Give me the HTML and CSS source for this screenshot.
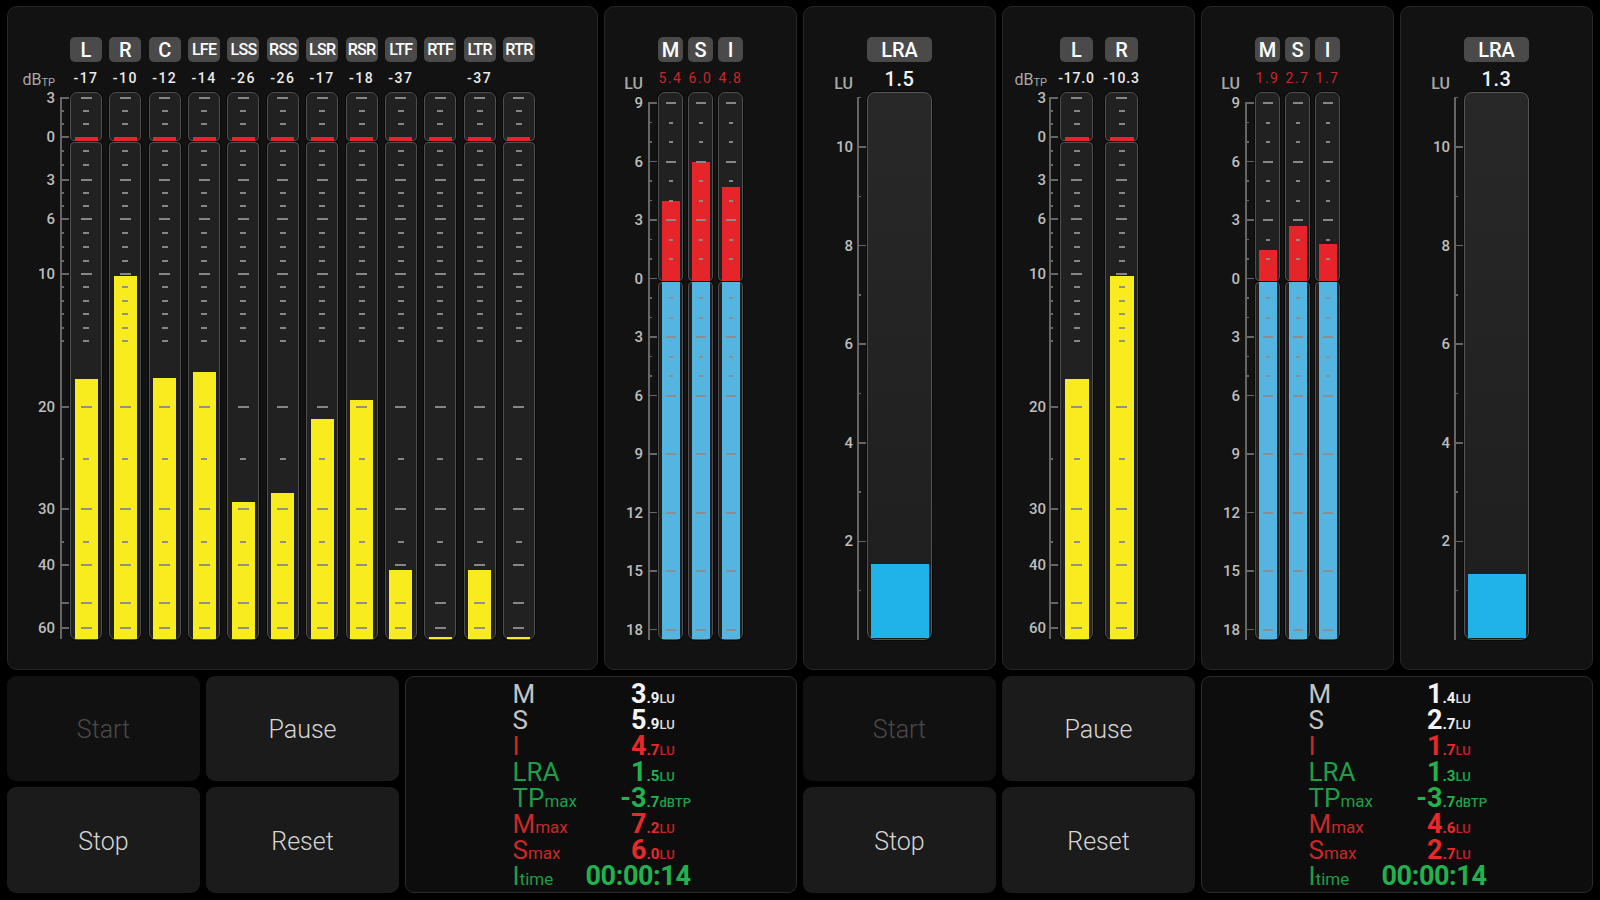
FILE: index.html
```html
<!DOCTYPE html>
<html lang="en">
<head>
<meta charset="utf-8">
<title>Loudness Meter</title>
<link rel="stylesheet" href="styles.css">
</head>
<body>
<div class="app">

  <!-- Multichannel true-peak meters -->
  <section class="panel multi">
    <div class="meter">
      <div class="scale">
        <div class="chip-space"></div>
        <div class="unit unit-db">dB<sub>TP</sub></div>
        <div class="scale-area">
          <div class="axis" data-scale="db"></div>
          <span class="sl" style="--y:6">3</span>
          <span class="sl" style="--y:45">0</span>
          <span class="sl" style="--y:88">3</span>
          <span class="sl" style="--y:127">6</span>
          <span class="sl" style="--y:182">10</span>
          <span class="sl" style="--y:315">20</span>
          <span class="sl" style="--y:417">30</span>
          <span class="sl" style="--y:473">40</span>
          <span class="sl" style="--y:536">60</span>
        </div>
      </div>
      <div class="channels">
        <div class="ch"><div class="chip">L</div><div class="val">-17</div>
          <div class="tube db"><div class="part top"><i class="zero"></i></div><div class="part bot"><b class="fill" style="--h:260"></b></div><div class="ticks" data-scale="db"></div></div></div>
        <div class="ch"><div class="chip">R</div><div class="val">-10</div>
          <div class="tube db"><div class="part top"><i class="zero"></i></div><div class="part bot"><b class="fill" style="--h:363"></b></div><div class="ticks" data-scale="db"></div></div></div>
        <div class="ch"><div class="chip">C</div><div class="val">-12</div>
          <div class="tube db"><div class="part top"><i class="zero"></i></div><div class="part bot"><b class="fill" style="--h:261"></b></div><div class="ticks" data-scale="db"></div></div></div>
        <div class="ch"><div class="chip sm">LFE</div><div class="val">-14</div>
          <div class="tube db"><div class="part top"><i class="zero"></i></div><div class="part bot"><b class="fill" style="--h:267"></b></div><div class="ticks" data-scale="db"></div></div></div>
        <div class="ch"><div class="chip sm">LSS</div><div class="val">-26</div>
          <div class="tube db"><div class="part top"><i class="zero"></i></div><div class="part bot"><b class="fill" style="--h:137.5"></b></div><div class="ticks" data-scale="db"></div></div></div>
        <div class="ch"><div class="chip sm">RSS</div><div class="val">-26</div>
          <div class="tube db"><div class="part top"><i class="zero"></i></div><div class="part bot"><b class="fill" style="--h:146.5"></b></div><div class="ticks" data-scale="db"></div></div></div>
        <div class="ch"><div class="chip sm">LSR</div><div class="val">-17</div>
          <div class="tube db"><div class="part top"><i class="zero"></i></div><div class="part bot"><b class="fill" style="--h:220.5"></b></div><div class="ticks" data-scale="db"></div></div></div>
        <div class="ch"><div class="chip sm">RSR</div><div class="val">-18</div>
          <div class="tube db"><div class="part top"><i class="zero"></i></div><div class="part bot"><b class="fill" style="--h:239.5"></b></div><div class="ticks" data-scale="db"></div></div></div>
        <div class="ch"><div class="chip sm">LTF</div><div class="val">-37</div>
          <div class="tube db"><div class="part top"><i class="zero"></i></div><div class="part bot"><b class="fill" style="--h:69.5"></b></div><div class="ticks" data-scale="db"></div></div></div>
        <div class="ch"><div class="chip sm">RTF</div><div class="val"></div>
          <div class="tube db"><div class="part top"><i class="zero"></i></div><div class="part bot"><b class="fill" style="--h:2"></b></div><div class="ticks" data-scale="db"></div></div></div>
        <div class="ch"><div class="chip sm">LTR</div><div class="val">-37</div>
          <div class="tube db"><div class="part top"><i class="zero"></i></div><div class="part bot"><b class="fill" style="--h:69"></b></div><div class="ticks" data-scale="db"></div></div></div>
        <div class="ch"><div class="chip sm">RTR</div><div class="val"></div>
          <div class="tube db"><div class="part top"><i class="zero"></i></div><div class="part bot"><b class="fill" style="--h:2"></b></div><div class="ticks" data-scale="db"></div></div></div>
      </div>
    </div>
  </section>

  <!-- M / S / I loudness 1 -->
  <section class="panel msi msi1">
    <div class="meter">
      <div class="scale">
        <div class="chip-space"></div>
        <div class="unit unit-lu">LU</div>
        <div class="scale-area">
          <div class="axis" data-scale="lu"></div>
          <span class="sl" style="--y:11">9</span>
          <span class="sl" style="--y:69.5">6</span>
          <span class="sl" style="--y:128">3</span>
          <span class="sl" style="--y:186.5">0</span>
          <span class="sl" style="--y:245">3</span>
          <span class="sl" style="--y:303.5">6</span>
          <span class="sl" style="--y:362">9</span>
          <span class="sl" style="--y:420.5">12</span>
          <span class="sl" style="--y:479">15</span>
          <span class="sl" style="--y:537.5">18</span>
        </div>
      </div>
      <div class="channels">
        <div class="ch"><div class="chip">M</div><div class="val red">5.4</div>
          <div class="tube lu"><div class="part top"><b class="fill red" style="--h:80.5"></b></div><div class="part bot"><b class="fill blue"></b></div><div class="ticks" data-scale="lu"></div></div></div>
        <div class="ch"><div class="chip">S</div><div class="val red">6.0</div>
          <div class="tube lu"><div class="part top"><b class="fill red" style="--h:119.5"></b></div><div class="part bot"><b class="fill blue"></b></div><div class="ticks" data-scale="lu"></div></div></div>
        <div class="ch"><div class="chip">I</div><div class="val red">4.8</div>
          <div class="tube lu"><div class="part top"><b class="fill red" style="--h:95"></b></div><div class="part bot"><b class="fill blue"></b></div><div class="ticks" data-scale="lu"></div></div></div>
      </div>
    </div>
  </section>

  <!-- LRA 1 -->
  <section class="panel lra lra1">
    <div class="meter">
      <div class="scale">
        <div class="chip-space"></div>
        <div class="unit unit-lu">LU</div>
        <div class="scale-area">
          <div class="axis" data-scale="lra"></div>
          <span class="sl" style="--y:55">10</span>
          <span class="sl" style="--y:153.6">8</span>
          <span class="sl" style="--y:252.2">6</span>
          <span class="sl" style="--y:350.8">4</span>
          <span class="sl" style="--y:449.4">2</span>
        </div>
      </div>
      <div class="channels">
        <div class="ch"><div class="chip">LRA</div><div class="val big">1.5</div>
          <div class="lratube"><b class="lrafill" style="--h:74"></b></div></div>
      </div>
    </div>
  </section>

  <!-- L / R true-peak -->
  <section class="panel lr">
    <div class="meter">
      <div class="scale">
        <div class="chip-space"></div>
        <div class="unit unit-db">dB<sub>TP</sub></div>
        <div class="scale-area">
          <div class="axis" data-scale="db"></div>
          <span class="sl" style="--y:6">3</span>
          <span class="sl" style="--y:45">0</span>
          <span class="sl" style="--y:88">3</span>
          <span class="sl" style="--y:127">6</span>
          <span class="sl" style="--y:182">10</span>
          <span class="sl" style="--y:315">20</span>
          <span class="sl" style="--y:417">30</span>
          <span class="sl" style="--y:473">40</span>
          <span class="sl" style="--y:536">60</span>
        </div>
      </div>
      <div class="channels">
        <div class="ch"><div class="chip">L</div><div class="val">-17.0</div>
          <div class="tube db"><div class="part top"><i class="zero"></i></div><div class="part bot"><b class="fill" style="--h:260"></b></div><div class="ticks" data-scale="db"></div></div></div>
        <div class="ch"><div class="chip">R</div><div class="val">-10.3</div>
          <div class="tube db"><div class="part top"><i class="zero"></i></div><div class="part bot"><b class="fill" style="--h:363"></b></div><div class="ticks" data-scale="db"></div></div></div>
      </div>
    </div>
  </section>

  <!-- M / S / I loudness 2 -->
  <section class="panel msi msi2">
    <div class="meter">
      <div class="scale">
        <div class="chip-space"></div>
        <div class="unit unit-lu">LU</div>
        <div class="scale-area">
          <div class="axis" data-scale="lu"></div>
          <span class="sl" style="--y:11">9</span>
          <span class="sl" style="--y:69.5">6</span>
          <span class="sl" style="--y:128">3</span>
          <span class="sl" style="--y:186.5">0</span>
          <span class="sl" style="--y:245">3</span>
          <span class="sl" style="--y:303.5">6</span>
          <span class="sl" style="--y:362">9</span>
          <span class="sl" style="--y:420.5">12</span>
          <span class="sl" style="--y:479">15</span>
          <span class="sl" style="--y:537.5">18</span>
        </div>
      </div>
      <div class="channels">
        <div class="ch"><div class="chip">M</div><div class="val red">1.9</div>
          <div class="tube lu"><div class="part top"><b class="fill red" style="--h:31.75"></b></div><div class="part bot"><b class="fill blue"></b></div><div class="ticks" data-scale="lu"></div></div></div>
        <div class="ch"><div class="chip">S</div><div class="val red">2.7</div>
          <div class="tube lu"><div class="part top"><b class="fill red" style="--h:56"></b></div><div class="part bot"><b class="fill blue"></b></div><div class="ticks" data-scale="lu"></div></div></div>
        <div class="ch"><div class="chip">I</div><div class="val red">1.7</div>
          <div class="tube lu"><div class="part top"><b class="fill red" style="--h:37.6"></b></div><div class="part bot"><b class="fill blue"></b></div><div class="ticks" data-scale="lu"></div></div></div>
      </div>
    </div>
  </section>

  <!-- LRA 2 -->
  <section class="panel lra lra2">
    <div class="meter">
      <div class="scale">
        <div class="chip-space"></div>
        <div class="unit unit-lu">LU</div>
        <div class="scale-area">
          <div class="axis" data-scale="lra"></div>
          <span class="sl" style="--y:55">10</span>
          <span class="sl" style="--y:153.6">8</span>
          <span class="sl" style="--y:252.2">6</span>
          <span class="sl" style="--y:350.8">4</span>
          <span class="sl" style="--y:449.4">2</span>
        </div>
      </div>
      <div class="channels">
        <div class="ch"><div class="chip">LRA</div><div class="val big">1.3</div>
          <div class="lratube"><b class="lrafill" style="--h:64"></b></div></div>
      </div>
    </div>
  </section>

  <!-- Controls 1 -->
  <button class="btn disabled start1">Start</button>
  <button class="btn pause1">Pause</button>
  <button class="btn stop1">Stop</button>
  <button class="btn reset1">Reset</button>

  <!-- Readout 1 -->
  <section class="readout readout1">
    <div class="rgrid">
      <span class="lbl gray">M</span><span class="int w">3</span><span class="frac w">.9<em>LU</em></span>
      <span class="lbl gray">S</span><span class="int w">5</span><span class="frac w">.9<em>LU</em></span>
      <span class="lbl red">I</span><span class="int r">4</span><span class="frac r">.7<em>LU</em></span>
      <span class="lbl green">LRA</span><span class="int g">1</span><span class="frac g">.5<em>LU</em></span>
      <span class="lbl green">TP<small>max</small></span><span class="int g">-3</span><span class="frac g">.7<em>dBTP</em></span>
      <span class="lbl red">M<small>max</small></span><span class="int r">7</span><span class="frac r">.2<em>LU</em></span>
      <span class="lbl red">S<small>max</small></span><span class="int r">6</span><span class="frac r">.0<em>LU</em></span>
      <span class="lbl green">I<small>time</small></span><span class="timer g">00:00:14</span>
    </div>
  </section>

  <!-- Controls 2 -->
  <button class="btn disabled start2">Start</button>
  <button class="btn pause2">Pause</button>
  <button class="btn stop2">Stop</button>
  <button class="btn reset2">Reset</button>

  <!-- Readout 2 -->
  <section class="readout readout2">
    <div class="rgrid">
      <span class="lbl gray">M</span><span class="int w">1</span><span class="frac w">.4<em>LU</em></span>
      <span class="lbl gray">S</span><span class="int w">2</span><span class="frac w">.7<em>LU</em></span>
      <span class="lbl red">I</span><span class="int r">1</span><span class="frac r">.7<em>LU</em></span>
      <span class="lbl green">LRA</span><span class="int g">1</span><span class="frac g">.3<em>LU</em></span>
      <span class="lbl green">TP<small>max</small></span><span class="int g">-3</span><span class="frac g">.7<em>dBTP</em></span>
      <span class="lbl red">M<small>max</small></span><span class="int r">4</span><span class="frac r">.6<em>LU</em></span>
      <span class="lbl red">S<small>max</small></span><span class="int r">2</span><span class="frac r">.7<em>LU</em></span>
      <span class="lbl green">I<small>time</small></span><span class="timer g">00:00:14</span>
    </div>
  </section>

</div>
<script src="app.js"></script>
</body>
</html>
```

FILE: styles.css
```css
* { box-sizing: border-box; }

html, body {
  margin: 0;
  padding: 0;
  background: #000;
}

body {
  width: 1600px;
  height: 900px;
  overflow: hidden;
  font-family: Roboto, "Liberation Sans", Arial, sans-serif;
  color: #eee;
}

.app {
  display: grid;
  grid-template-columns: repeat(8, 193px);
  grid-template-rows: 664px 105px 106px;
  gap: 6px;
  padding: 6px 7px 7px;
  width: 1600px;
  height: 900px;
}

/* ---------- meter panels ---------- */
.panel {
  background: #121212;
  border: 1px solid #272727;
  border-radius: 10px;
  padding-top: 30px;
}

.multi { grid-column: 1 / 4; grid-row: 1; }
.msi1  { grid-column: 4; grid-row: 1; }
.lra1  { grid-column: 5; grid-row: 1; }
.lr    { grid-column: 6; grid-row: 1; }
.msi2  { grid-column: 7; grid-row: 1; }
.lra2  { grid-column: 8; grid-row: 1; }

.meter { display: flex; }

.scale {
  flex: none;
  display: flex;
  flex-direction: column;
}
.multi .scale { width: 62px; }
.lr .scale    { width: 57px; }
.msi .scale   { width: 53px; }
.lra .scale   { width: 63px; }

.chip-space { height: 25px; }

.unit {
  height: 30px;
  display: flex;
  align-items: flex-end;
  justify-content: flex-end;
  padding-right: 15px;
  color: #a9a9a9;
  line-height: 1;
  white-space: nowrap;
}
.unit-db { font-size: 16px; padding-bottom: 4px; }
.unit-db sub { font-size: 11px; vertical-align: -3px; line-height: 1; }
.unit-lu { font-size: 16px; font-weight: 500; padding-bottom: 0; }
.lra .unit-lu { padding-right: 14px; }
.lr .unit-db { padding-right: 13px; }

.scale-area {
  position: relative;
  height: 548px;
}

.sl {
  position: absolute;
  right: 15px;
  top: calc(var(--y) * 1px);
  transform: translateY(-50%);
  font-size: 15px;
  font-weight: 500;
  line-height: 1;
  color: #bdbdbd;
}
.lra .sl { right: 14px; }
.lr .sl { right: 14px; }

.axis {
  position: absolute;
  top: 0;
  bottom: 0;
  width: 10px;
}
.multi .axis { left: 52px; }
.lr .axis    { left: 46px; }
.msi .axis   { left: 43px; }
.lra .axis   { left: 53px; }

.axis::before {
  content: "";
  position: absolute;
  left: 0;
  width: 1.5px;
  top: var(--t);
  bottom: var(--b);
  background: #666;
}
.axis[data-scale="db"]  { --t: 6px;   --b: 1px; }
.axis[data-scale="lu"]  { --t: 11px;  --b: 0px; }
.axis[data-scale="lra"] { --t: 5.7px; --b: 0px; }

.tk {
  position: absolute;
  left: 0;
  width: 4px;
  height: 1.5px;
  margin-top: -0.75px;
  background: #666;
}
.tk.long { width: 9px; }

.channels { display: flex; }
.multi .channels { gap: 7.36px; }
.lr .channels    { gap: 12px; }
.msi .channels   { gap: 5px; }

.ch {
  display: flex;
  flex-direction: column;
  flex: none;
}
.multi .ch { width: 32px; }
.lr .ch    { width: 33px; }
.msi .ch   { width: 25px; }
.lra .ch   { width: 65px; }

.chip {
  height: 25px;
  border-radius: 5px;
  background: #4a4a4a;
  color: #fff;
  display: flex;
  align-items: center;
  justify-content: center;
  font-size: 20px;
  font-weight: 500;
  line-height: 1;
}
.chip.sm { font-size: 16px; letter-spacing: -0.7px; }

.val {
  height: 30px;
  display: flex;
  align-items: center;
  justify-content: center;
  white-space: nowrap;
  font-size: 14px;
  font-weight: 500;
  letter-spacing: 1.5px;
  color: #ececec;
  padding-top: 2px;
}
.lr .val { letter-spacing: 0.8px; }
.val.red { color: #c8282b; font-weight: 400; letter-spacing: 1.5px; }
.val.big { font-size: 20px; letter-spacing: 0.5px; color: #f2f2f2; padding-top: 3px; }

/* ---------- tubes ---------- */
.tube {
  position: relative;
  height: 548px;
  display: flex;
  flex-direction: column;
  gap: 1px;
}

.part {
  position: relative;
  border: 1.5px solid #505050;
  background: #212121;
  box-shadow: 0 0 0 1px #0a0a0a;
}
.db .top { height: 49px; border-radius: 7px 7px 4px 4px; }
.lu .top { height: 189px; border-radius: 7px 7px 4px 4px; }
.part.bot { flex: 1; border-radius: 4px 4px 7px 7px; }

.zero {
  position: absolute;
  left: 3.5px;
  right: 3.5px;
  bottom: -0.5px;
  height: 4px;
  background: #ea2329;
}

.fill {
  position: absolute;
  left: 3.5px;
  right: 3.5px;
  bottom: 0;
  height: calc(var(--h) * 1px);
  background: #f8ec1f;
}
.lu .fill { left: 2.5px; right: 2.5px; }
.fill.red { bottom: -1.5px; background: #e5252a; }
.fill.blue { top: -1px; bottom: 0; height: auto; background: #54b6e0; }

.ticks {
  position: absolute;
  inset: 0;
  z-index: 2;
  pointer-events: none;
}

.dash {
  position: absolute;
  left: 50%;
  height: 2px;
  margin-top: -1px;
  width: 6px;
  margin-left: -3px;
  background: rgba(140, 140, 140, 0.95);
}
.dash.long { width: 11px; margin-left: -5.5px; }
.lu .dash { width: 4px; margin-left: -2px; }
.lu .dash.long { width: 10px; margin-left: -5px; }

.lratube {
  position: relative;
  height: 548px;
  border: 1.5px solid #555;
  border-radius: 8px;
  background: linear-gradient(#282828, #1e1e1e);
  box-shadow: 0 0 0 1px #0a0a0a;
}
.lrafill {
  position: absolute;
  left: 2.5px;
  right: 2.5px;
  bottom: 1.5px;
  height: calc(var(--h) * 1px);
  background: #1fb3e9;
}

/* ---------- buttons ---------- */
.btn {
  border: none;
  margin: 0;
  padding: 2px 0 0;
  border-radius: 9px;
  background: #1b1b1b;
  color: #d6d6d6;
  font-family: Roboto, "Liberation Sans", Arial, sans-serif;
  font-size: 25px;
  font-weight: 300;
  display: flex;
  align-items: center;
  justify-content: center;
}
.btn.disabled { background: #111; color: #4a4a4a; }

.start1 { grid-column: 1; grid-row: 2; }
.pause1 { grid-column: 2; grid-row: 2; }
.stop1  { grid-column: 1; grid-row: 3; }
.reset1 { grid-column: 2; grid-row: 3; }
.start2 { grid-column: 5; grid-row: 2; }
.pause2 { grid-column: 6; grid-row: 2; }
.stop2  { grid-column: 5; grid-row: 3; }
.reset2 { grid-column: 6; grid-row: 3; }

/* ---------- readouts ---------- */
.readout {
  background: #0d0d0d;
  border: 1.5px solid #2b2b2b;
  border-radius: 9px;
  display: flex;
  align-items: center;
  padding-left: 106.5px;
}
.readout1 { grid-column: 3 / 5; grid-row: 2 / 4; }
.readout2 { grid-column: 7 / 9; grid-row: 2 / 4; }

.rgrid {
  display: grid;
  grid-template-columns: 73px 61px 44px;
  grid-auto-rows: 26px;
  align-items: baseline;
  line-height: 26px;
  white-space: nowrap;
}

.lbl { font-size: 26px; font-weight: 400; }
.lbl small { font-size: 17px; }
.int { font-size: 27px; font-weight: 700; text-align: right; }
.frac { font-size: 15px; font-weight: 700; }
.frac em { font-style: normal; font-size: 13px; font-weight: 500; }
.timer { grid-column: 2 / 4; font-size: 27px; font-weight: 700; letter-spacing: -0.4px; text-align: right; }

.lbl.gray { color: #c4c4c4; }
.lbl.red { color: #cc2727; }
.lbl.green { color: #1f9d49; }

.w { color: #f4f4f4; }
.w em { color: #dcdcdc; }
.r { color: #e62a2b; }
.r em { color: #c22222; }
.g { color: #22b24d; }
.g em { color: #1ea247; }
```

FILE: app.js
```js
(function () {
  var DB = [[6,1],[19,0],[32,0],[45,1,1],[59,0],[73,0],[88,1],[101,0],[114,0],[127,1],
            [141,0],[155,0],[169,0],[182,1],[195,0],[209,0],[222,0],[236,0],[249,0],
            [315,1],[367,0],[417,1],[450,0],[473,1],[511,1],[536,1]];
  var LU = [];
  var v;
  for (v = 9; v >= 1; v--) LU.push([186.5 - 19.5 * v, v % 3 === 0 ? 1 : 0]);
  LU.push([186.5, 1, 1]);
  [1, 2, 3, 4, 5, 6, 9, 12, 15, 18].forEach(function (n) {
    LU.push([186.5 + 19.5 * n, n % 3 === 0 ? 1 : 0]);
  });
  var LRA = [];
  for (v = 11; v >= 1; v--) LRA.push([548 - 49.3 * v, v % 2 === 0 ? 1 : 0]);
  var SC = { db: DB, lu: LU, lra: LRA };

  function add(parent, cls, y) {
    var i = document.createElement('i');
    i.className = cls;
    i.style.top = y + 'px';
    parent.appendChild(i);
  }

  document.querySelectorAll('.axis').forEach(function (ax) {
    SC[ax.dataset.scale].forEach(function (t) {
      add(ax, 'tk' + (t[1] ? ' long' : ''), t[0]);
    });
  });
  document.querySelectorAll('.ticks').forEach(function (tk) {
    SC[tk.dataset.scale].forEach(function (t) {
      if (t[2]) return;
      add(tk, 'dash' + (t[1] ? ' long' : ''), t[0]);
    });
  });
})();
```
